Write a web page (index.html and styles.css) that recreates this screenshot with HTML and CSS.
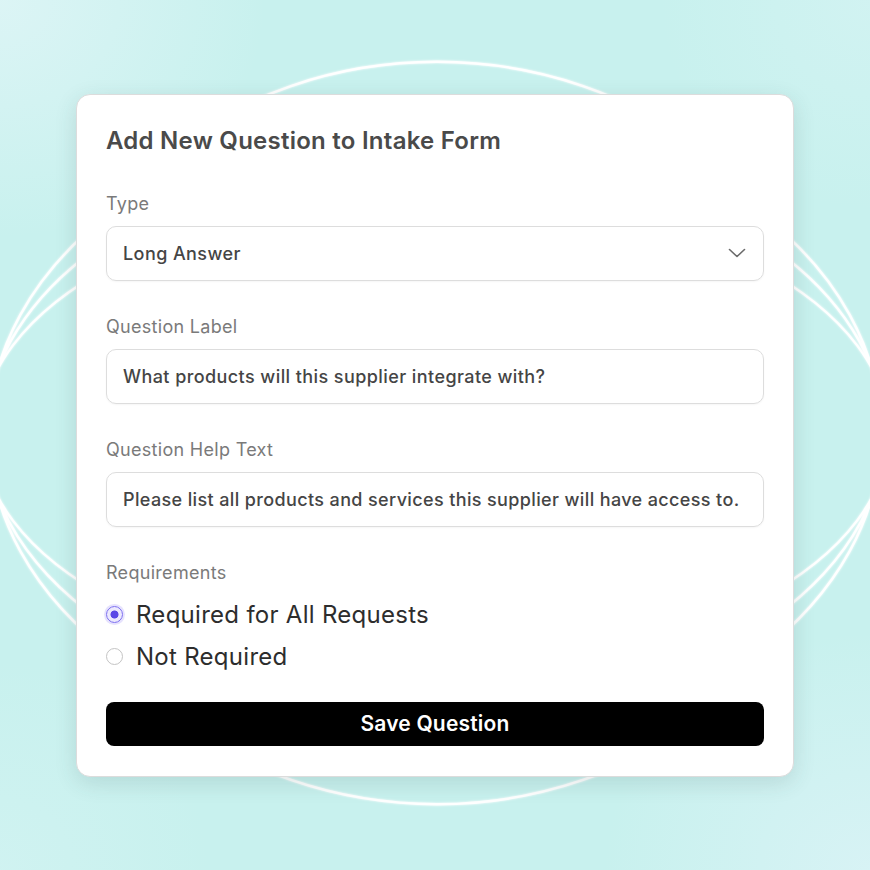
FILE: index.html
```html
<!DOCTYPE html>
<html lang="en">
<head>
<meta charset="utf-8">
<title>Add New Question</title>
<link rel="stylesheet" href="styles.css">
</head>
<body>
<div class="stage">
  <svg class="orbits" width="870" height="870" viewBox="0 0 870 870" aria-hidden="true">
    <defs>
      <filter id="glow" x="-10%" y="-10%" width="120%" height="120%">
        <feGaussianBlur stdDeviation="1.2" result="b"/>
        <feMerge><feMergeNode in="b"/><feMergeNode in="SourceGraphic"/></feMerge>
      </filter>
    </defs>
    <g fill="none" stroke="#ffffff" stroke-width="2.4" stroke-linecap="round" filter="url(#glow)">
      <path d="M 171 150 A 411 371 0 0 1 703 150"/>
      <path d="M 171 716 A 411 371 0 0 0 703 716"/>
      <ellipse cx="435" cy="433" rx="446" ry="321"/>
      <ellipse cx="435" cy="433" rx="449" ry="281"/>
      <ellipse cx="435" cy="433" rx="454" ry="238"/>
    </g>
  </svg>

  <form class="card">
    <h1 class="card-title">Add New Question to Intake Form</h1>

    <div class="field">
      <label class="field-label">Type</label>
      <div class="control select">
        <span class="control-text">Long Answer</span>
        <svg class="chevron" width="18" height="10" viewBox="0 0 18 10"><path d="M1.5 1.5 L9 8.5 L16.5 1.5" fill="none" stroke="#6b6b6b" stroke-width="1.6" stroke-linecap="round" stroke-linejoin="round"/></svg>
      </div>
    </div>

    <div class="field">
      <label class="field-label">Question Label</label>
      <div class="control"><span class="control-text">What products will this supplier integrate with?</span></div>
    </div>

    <div class="field">
      <label class="field-label">Question Help Text</label>
      <div class="control"><span class="control-text help">Please list all products and services this supplier will have access to.</span></div>
    </div>

    <div class="field field-last">
      <label class="field-label">Requirements</label>
      <div class="radio-row">
        <span class="radio radio-on"></span>
        <span class="radio-text">Required for All Requests</span>
      </div>
      <div class="radio-row">
        <span class="radio"></span>
        <span class="radio-text">Not Required</span>
      </div>
    </div>

    <button type="button" class="save-btn">Save Question</button>
  </form>
</div>
</body>
</html>
```

FILE: styles.css
```css
* { box-sizing: border-box; }

html, body {
  margin: 0;
  padding: 0;
}

body {
  width: 870px;
  height: 870px;
  overflow: hidden;
  font-family: "Inter", "Noto Sans", "Liberation Sans", sans-serif;
}

.stage {
  position: relative;
  width: 870px;
  height: 870px;
  display: flex;
  align-items: center;
  justify-content: center;
  background:
    radial-gradient(ellipse 380px 340px at 0% 0%, rgba(222, 245, 246, 0.9), rgba(222, 245, 246, 0) 70%),
    radial-gradient(ellipse 380px 340px at 100% 100%, rgba(218, 243, 246, 0.85), rgba(218, 243, 246, 0) 70%),
    radial-gradient(ellipse 300px 300px at 100% 0%, rgba(215, 244, 244, 0.6), rgba(215, 244, 244, 0) 70%),
    radial-gradient(ellipse 300px 300px at 0% 100%, rgba(215, 244, 244, 0.5), rgba(215, 244, 244, 0) 70%),
    #c8f1ee;
}

.orbits {
  position: absolute;
  left: 0;
  top: 0;
}

.card {
  position: relative;
  width: 718px;
  height: 683px;
  margin: 0;
  padding: 31px 29px 30px 29px;
  background: #ffffff;
  border: 1px solid #dcdcdc;
  border-radius: 14px;
  box-shadow: 0 6px 22px rgba(40, 70, 70, 0.14);
  display: flex;
  flex-direction: column;
}

.card-title {
  margin: 0 0 37px 0;
  font-size: 24px;
  line-height: 30px;
  font-weight: 600;
  color: #4a4a4a;
  letter-spacing: 0.25px;
}

.field {
  display: flex;
  flex-direction: column;
  margin-bottom: 35px;
}

.field-last {
  margin-bottom: 24px;
}

.field-label {
  display: block;
  font-size: 18px;
  line-height: 22px;
  color: #7a7a7a;
  margin-bottom: 11px;
  letter-spacing: 0.3px;
}

.field-last .field-label {
  margin-bottom: 10px;
}

.control {
  height: 55px;
  border: 1px solid #dddddd;
  border-radius: 10px;
  display: flex;
  align-items: center;
  justify-content: space-between;
  padding: 0 17px 0 16px;
  box-shadow: 0 1px 2px rgba(0, 0, 0, 0.04);
}

.control-text {
  font-size: 18px;
  font-weight: 500;
  color: #454545;
  letter-spacing: 0.42px;
}

.control-text.help {
  letter-spacing: 0.37px;
}

.radio-row {
  height: 42px;
  display: flex;
  align-items: center;
  gap: 13px;
}

.radio {
  width: 17px;
  height: 17px;
  border-radius: 50%;
  border: 1.5px solid #c4c4c4;
  background: #ffffff;
  flex: none;
}

.radio-on {
  border: 1.5px solid #7a6cf0;
  background: radial-gradient(circle, #5a48e6 0 3.6px, #ece9fd 4.4px);
  box-shadow: 0 0 0 2px rgba(140, 125, 245, 0.22);
}

.radio-text {
  font-size: 24px;
  color: #2d2d2d;
  letter-spacing: 0.28px;
}

.save-btn {
  height: 44px;
  width: 100%;
  flex: none;
  border: none;
  border-radius: 8px;
  background: #000000;
  color: #ffffff;
  font-family: "Inter", "Noto Sans", sans-serif;
  font-size: 21px;
  font-weight: 600;
  letter-spacing: 0.2px;
  padding: 0;
}
```
